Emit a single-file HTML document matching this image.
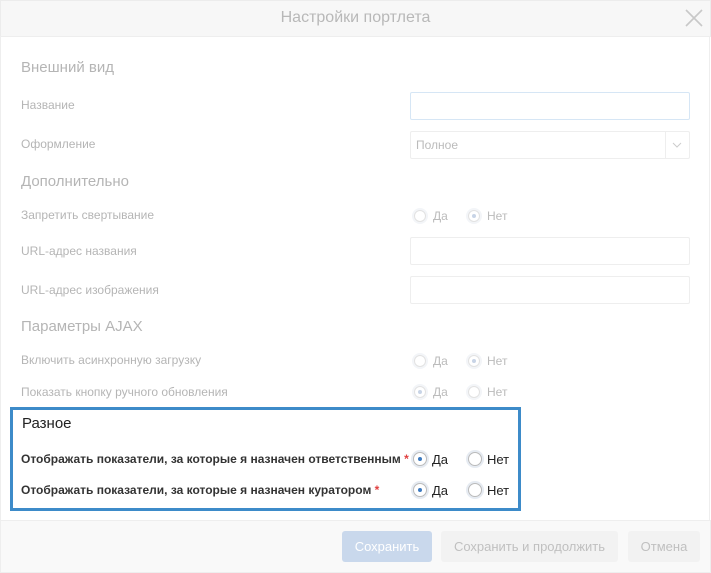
<!DOCTYPE html>
<html><head><meta charset="utf-8"><style>
body{margin:0;width:711px;height:573px;background:#fff;font-family:"Liberation Sans",Arial,sans-serif;position:relative;overflow:hidden}
.a{position:absolute;white-space:nowrap}
.hdr{left:0;top:0;width:709px;height:35px;background:#f7f7f7;border:1px solid #ececec;border-bottom:1px solid #eee}
.title{left:0;width:711px;top:9px;text-align:center;font-size:16px;color:#b8b8b8}
.sec{font-size:15px;color:#b5b5b5;left:21px}
.lbl{font-size:12px;color:#b5b5b5;left:21px}
.inp{left:410px;width:278px;height:26px;border:1px solid #eee;border-radius:2px;background:#fff}
.r{width:16px;height:16px;border-radius:50%;background:#f3f5f8}
.r i{position:absolute;left:2px;top:2px;width:10px;height:10px;border:1px solid #e2e2e2;border-radius:50%;background:#fff}
.r b{position:absolute;left:6px;top:6px;width:4px;height:4px;border-radius:50%;background:#c8d4e6;z-index:2}
.rt{font-size:12px;color:#bbb}
.box{left:10px;top:407px;width:505px;height:98px;border:3px solid #3d8bc9}
.bl{font-size:12px;font-weight:bold;color:#333;left:21px}
.R{width:18px;height:18px;border-radius:50%;background:#e6ebf2}
.R i{position:absolute;left:2px;top:2px;width:12px;height:12px;border:1px solid #bbb;border-radius:50%;background:#fff}
.R b{position:absolute;left:7px;top:7px;width:4px;height:4px;border-radius:50%;background:#3d7ac0;z-index:2}
.Rt{font-size:13px;color:#222}
.ftr{left:0;top:520px;width:709px;height:51px;background:#f9f9f9;border:1px solid #eee}
.btn{top:531px;height:31px;border-radius:3px;font-size:13px;text-align:center;line-height:31px}
</style></head><body>
<div class="a hdr"></div>
<div class="a title">Настройки портлета</div>
<svg class="a" style="left:684px;top:8px" width="20" height="20"><path d="M2 2L18 18M18 2L2 18" stroke="#c8c8c8" stroke-width="1.6"/></svg>
<div class="a" style="left:0;top:36px;width:1px;height:484px;background:#eee"></div>
<div class="a" style="left:709px;top:36px;width:1px;height:484px;background:#eee"></div>

<div class="a sec" style="top:59px">Внешний вид</div>
<div class="a lbl" style="top:98px">Название</div>
<div class="a inp" style="top:92px;border-color:#d6e6f5"></div>
<div class="a lbl" style="top:137px">Оформление</div>
<div class="a inp" style="top:131px"></div>
<div class="a" style="left:665px;top:132px;width:1px;height:26px;background:#eee"></div>
<svg class="a" style="left:671px;top:140px" width="12" height="10"><path d="M2 3L6 7L10 3" stroke="#ccc" fill="none"/></svg>
<div class="a rt" style="left:416px;top:138px">Полное</div>
<div class="a sec" style="top:173px">Дополнительно</div>
<div class="a lbl" style="top:208px">Запретить свертывание</div>
<div class="a r" style="left:412px;top:208px"><i></i></div><div class="a rt" style="left:433px;top:209px">Да</div>
<div class="a r" style="left:466px;top:208px"><i></i><b></b></div><div class="a rt" style="left:487px;top:209px">Нет</div>
<div class="a lbl" style="top:244px">URL-адрес названия</div>
<div class="a inp" style="top:237px"></div>
<div class="a lbl" style="top:283px">URL-адрес изображения</div>
<div class="a inp" style="top:276px"></div>
<div class="a sec" style="top:318px">Параметры AJAX</div>
<div class="a lbl" style="top:353px">Включить асинхронную загрузку</div>
<div class="a r" style="left:412px;top:353px"><i></i></div><div class="a rt" style="left:433px;top:354px">Да</div>
<div class="a r" style="left:466px;top:353px"><i></i><b></b></div><div class="a rt" style="left:487px;top:354px">Нет</div>
<div class="a lbl" style="top:385px">Показать кнопку ручного обновления</div>
<div class="a r" style="left:412px;top:384px"><i></i><b></b></div><div class="a rt" style="left:433px;top:385px">Да</div>
<div class="a r" style="left:466px;top:384px"><i></i></div><div class="a rt" style="left:487px;top:385px">Нет</div>

<div class="a box"></div>
<div class="a" style="left:22px;top:415px;font-size:15px;color:#222">Разное</div>
<div class="a bl" style="top:452px">Отображать показатели, за которые я назначен ответственным <span style="color:#e04040">*</span></div>
<div class="a R" style="left:411px;top:450px"><i></i><b></b></div><div class="a Rt" style="left:432px;top:452px">Да</div>
<div class="a R" style="left:466px;top:450px"><i></i></div><div class="a Rt" style="left:487px;top:452px">Нет</div>
<div class="a bl" style="top:483px">Отображать показатели, за которые я назначен куратором <span style="color:#e04040">*</span></div>
<div class="a R" style="left:411px;top:481px"><i></i><b></b></div><div class="a Rt" style="left:432px;top:483px">Да</div>
<div class="a R" style="left:466px;top:481px"><i></i></div><div class="a Rt" style="left:487px;top:483px">Нет</div>

<div class="a ftr"></div>
<div class="a btn" style="left:342px;width:90px;background:#c9d8ec;color:#fff">Сохранить</div>
<div class="a btn" style="left:441px;width:177px;background:#f2f2f2;color:#c0c0c0">Сохранить и продолжить</div>
<div class="a btn" style="left:628px;width:72px;background:#f2f2f2;color:#c0c0c0">Отмена</div>
</body></html>
